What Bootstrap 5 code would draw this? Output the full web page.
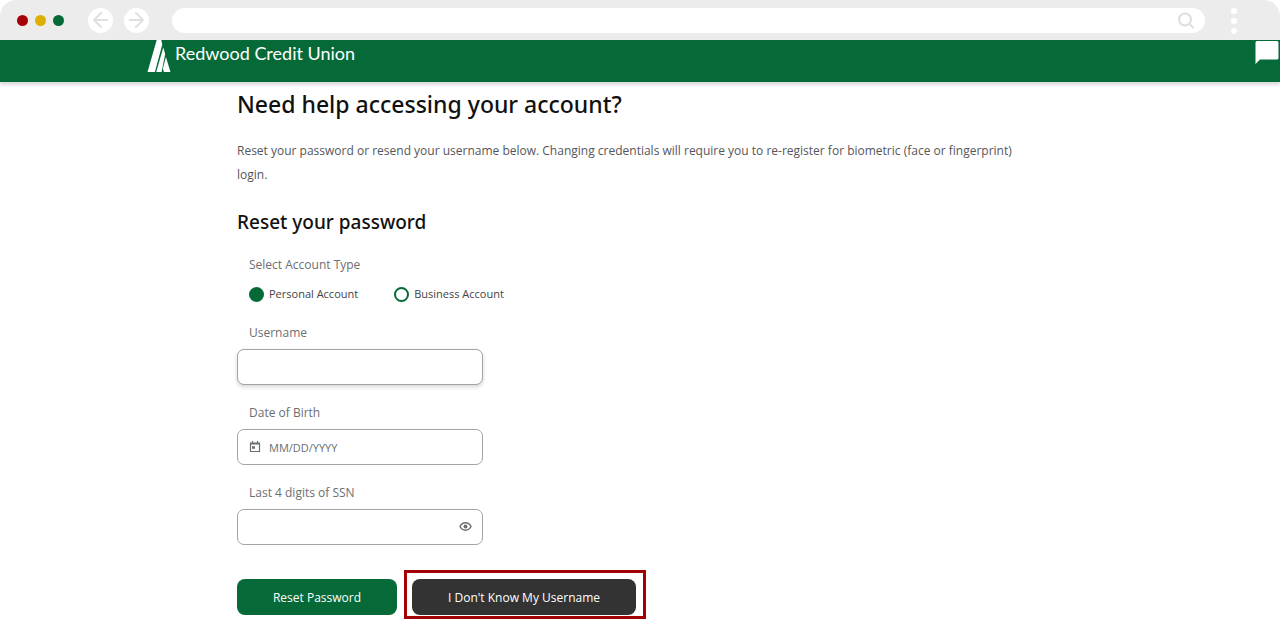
<!DOCTYPE html>
<html lang="en">
<head>
<meta charset="utf-8">
<meta name="viewport" content="width=device-width, initial-scale=1">
<title>Redwood Credit Union - Account access</title>
<link href="https://cdn.jsdelivr.net/npm/bootstrap@5.3.0/dist/css/bootstrap.min.css" rel="stylesheet">
<style>
  :root { --rcu-green: #056a38; --chrome: #ececec; }
  body { font-family: "Open Sans", "Noto Sans", sans-serif; font-size: 12px; line-height: 20px; color: #55565a; background: #fff; }
  .browser-bar { height: 40px; background: var(--chrome); border-radius: 16px 16px 0 0; padding: 0 43px 0 17px; }
  .dots { gap: 7px; }
  .dot { width: 11px; height: 11px; border-radius: 50%; }
  .dot-red { background: #a60009; }
  .dot-yellow { background: #dbb002; }
  .dot-green { background: var(--rcu-green); }
  .nav-circles { gap: 11px; }
  .nav-circle { width: 25px; height: 25px; border-radius: 50%; border: 0; padding: 0; background: #fff; }
  .address-wrap { margin: 0 26px 0 23px; }
  .address { height: 25px; border: 0; border-radius: 13px; padding: 0 40px 0 16px; width: 100%; }
  .address-icon { right: 10px; top: 4px; }
  .menu-dots { border: 0; background: none; padding: 0; width: 6px; height: 40px; }
  .site-header { height: 42px; background: var(--rcu-green); box-shadow: 0 3px 3px rgba(0,0,0,.14); }
  .page-width { width: 100%; max-width: 986px; margin: 0 auto; }
  .brand { font-family: Lato, sans-serif; font-size: 18px; line-height: 26px; color: #fff; gap: 4px; }
  .chat { border: 0; background: none; padding: 0; right: 1px; top: 1px; }
  main.page-width { padding: 6px 90px 0; }
  h1, h2 { font-family: "Noto Sans", sans-serif; font-weight: 500; color: #111; margin: 0; }
  h1 { font-size: 23px; line-height: 32px; margin-bottom: 19px; }
  h2 { font-size: 19px; line-height: 28px; margin-bottom: 19px; }
  .intro { line-height: 24px; margin: 0 0 21px; }
  .inset { padding-left: 12px; }
  .caption-text { color: #6d6e71; margin: 0; }
  .field { width: 246px; max-width: 100%; margin-bottom: 18px; }
  .field .caption-text { margin-bottom: 6px; display: block; }
  .field .form-control { height: 36px; border: 1px solid #a3a3a3; border-radius: 7px; font-size: 11px; padding: 0 11px; color: #444; }
  .field .form-control::placeholder { color: #6d6e71; }
  .field .raised { box-shadow: 0 2px 4px rgba(0,0,0,.16); }
  .field .with-icon { padding-left: 31px; }
  .icon-start { left: 12px; top: 12px; }
  .icon-end { right: 11px; top: 11px; border: 0; background: none; padding: 0; }
  .account-types { gap: 36px; margin: 9px 0 19px; }
  .account-type { gap: 5px; }
  .account-types label { font-size: 11px; color: #444; }
  .account-types input { appearance: none; width: 15px; height: 15px; margin: 0; border: 2px solid var(--rcu-green); border-radius: 50%; background: #fff; }
  .account-types input:checked { background: var(--rcu-green); }
  .actions { margin-top: 25px; gap: 7px; }
  .actions .btn { height: 36px; padding: 1px 0 0; border: 0; border-radius: 8px; font-size: 12px; color: #fff; }
  .actions .btn-reset { width: 160px; background: var(--rcu-green); margin-top: 9px; }
  .actions .btn-forgot { width: 224px; background: #333; }
  .callout { border: 3px solid #a30006; padding: 6px 7px 1px 5px; }
</style>
</head>
<body>
<div class="browser-bar d-flex align-items-center">
  <div class="dots d-flex">
    <span class="dot dot-red"></span>
    <span class="dot dot-yellow"></span>
    <span class="dot dot-green"></span>
  </div>
  <div class="nav-circles d-flex ms-4">
    <button class="nav-circle d-flex align-items-center justify-content-center" type="button" aria-label="Back">
      <svg width="15" height="16" viewBox="0 0 15 16" fill="none" stroke="#e0e0e0" stroke-width="2" stroke-linecap="round" stroke-linejoin="round"><path d="M14 8H1M8 1L1 8l7 7"/></svg>
    </button>
    <button class="nav-circle d-flex align-items-center justify-content-center" type="button" aria-label="Forward">
      <svg width="15" height="16" viewBox="0 0 15 16" fill="none" stroke="#e0e0e0" stroke-width="2" stroke-linecap="round" stroke-linejoin="round"><path d="M1 8h13M7 1l7 7-7 7"/></svg>
    </button>
  </div>
  <div class="address-wrap position-relative flex-grow-1 d-flex">
    <input class="address" type="text" aria-label="Address">
    <svg class="address-icon position-absolute" width="18" height="18" viewBox="0 0 18 18" fill="none" stroke="#dedede" stroke-width="2" stroke-linecap="round"><circle cx="8" cy="7.500" r="6"/><path d="M12.500 12l3.500 3.500"/></svg>
  </div>
  <button class="menu-dots d-flex" type="button" aria-label="Menu">
    <svg width="6" height="40" viewBox="0 0 6 40" fill="#fff"><circle cx="3" cy="11" r="3"/><circle cx="3" cy="21" r="3"/><circle cx="3" cy="31" r="3"/></svg>
  </button>
</div>

<header class="site-header position-relative">
  <div class="page-width">
    <a class="brand d-inline-flex align-items-start text-decoration-none" href="#">
      <svg width="24" height="33" viewBox="0 0 24 33" fill="#fff"><path d="M9.700 0h4.600l1 4.500L7.900 32H.500zM16.300 7.500l1.900 6.500-3.600 18H9.200zM18.900 17L23.500 32h-6.600l-1-3.500z"/></svg>
      <span>Redwood Credit Union</span>
    </a>
  </div>
  <button class="chat position-absolute d-flex" type="button" aria-label="Chat">
    <svg width="24" height="24" viewBox="0 0 24 24" fill="#fff"><path d="M2 0h20a1.500 1.500 0 0 1 1.500 1.500v15.500a1.500 1.500 0 0 1-1.500 1.500H5L.5 23V1.500A1.500 1.500 0 0 1 2 0z"/></svg>
  </button>
</header>

<main class="page-width">
  <h1>Need help accessing your account?</h1>
  <p class="intro">Reset your password or resend your username below. Changing credentials will require you to re-register for biometric (face or fingerprint) login.</p>
  <h2>Reset your password</h2>
  <form>
    <div class="inset" role="radiogroup" aria-labelledby="type-caption">
      <p class="caption-text" id="type-caption">Select Account Type</p>
      <div class="account-types d-flex flex-wrap">
        <div class="account-type d-flex align-items-center"><input type="radio" name="type" id="personal" checked><label for="personal">Personal Account</label></div>
        <div class="account-type d-flex align-items-center"><input type="radio" name="type" id="business"><label for="business">Business Account</label></div>
      </div>
    </div>
    <div class="field">
      <label class="caption-text inset" for="username">Username</label>
      <input class="form-control raised" type="text" id="username">
    </div>
    <div class="field">
      <label class="caption-text inset" for="dob">Date of Birth</label>
      <div class="position-relative">
        <input class="form-control with-icon" type="text" id="dob" placeholder="MM/DD/YYYY">
        <svg class="icon-start position-absolute" width="12" height="12" viewBox="0 0 12 12" fill="none" stroke="#6d6e71"><path d="M1.500 2.500h9v8h-9z" stroke-width="1.200"/><path d="M1 2.500h10" stroke-width="2"/><path d="M3.500 0v2M8.500 0v2" stroke-width="1.200"/><path d="M3 6.500h3" stroke-width="2.500"/></svg>
      </div>
    </div>
    <div class="field mb-0">
      <label class="caption-text inset" for="ssn">Last 4 digits of SSN</label>
      <div class="position-relative">
        <input class="form-control" type="password" id="ssn">
        <button class="icon-end position-absolute d-flex" type="button" aria-label="Show digits">
          <svg width="13" height="13" viewBox="0 0 13 13"><path d="M1 6.500C3.500 1.600 9.500 1.600 12 6.500 9.500 11.400 3.500 11.400 1 6.500z" fill="none" stroke="#6d6e71" stroke-width="1.500"/><circle cx="6.500" cy="6.500" r="2" fill="#6d6e71"/></svg>
        </button>
      </div>
    </div>
    <div class="actions d-flex flex-wrap align-items-start">
      <button class="btn btn-reset" type="button">Reset Password</button>
      <div class="callout"><button class="btn btn-forgot d-block" type="button">I Don't Know My Username</button></div>
    </div>
  </form>
</main>
<script src="https://cdn.jsdelivr.net/npm/bootstrap@5.3.0/dist/js/bootstrap.bundle.min.js"></script>
</body>
</html>
